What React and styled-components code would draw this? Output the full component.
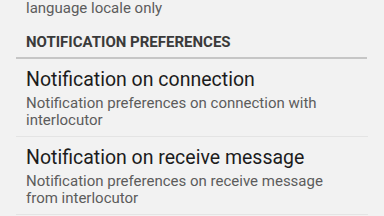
import React from "react";
import styled, { createGlobalStyle } from "styled-components";

const Global = createGlobalStyle`
  html, body { margin: 0; padding: 0; background: #f2f2f2; }
  body { font-family: Roboto, "Noto Sans", Arial, sans-serif; overflow: hidden; }
  * { box-sizing: border-box; }
`;

const Screen = styled.div`
  width: 384px;
  height: 216px;
  background: #f2f2f2;
  overflow: hidden;
  display: flex;
  flex-direction: column;
`;

const Tail = styled.div`
  padding-left: 26px;
  font-size: 15px;
  line-height: 17px;
  color: #5c5c5c;
`;

const Category = styled.div`
  margin: 17px 17px 0 16px;
  padding: 0 0 6px 10px;
  border-bottom: 2px solid #c6c6c6;
  font-size: 15px;
  line-height: 17px;
  font-weight: 700;
  color: #3a3a3a;
`;

const Item = styled.div`
  margin: 0 16px;
  padding: 10px 0 7px 10px;
  border-bottom: 1px solid #e4e4e4;
  display: flex;
  flex-direction: column;
  gap: 4px;
`;

const Title = styled.div`
  font-size: 19.5px;
  line-height: 22px;
  color: #1c1c1c;
`;

const Summary = styled.div`
  width: 310px;
  font-size: 15px;
  line-height: 17px;
  color: #5c5c5c;
`;

const items = [
  {
    title: "Notification on connection",
    summary: "Notification preferences on connection with interlocutor",
  },
  {
    title: "Notification on receive message",
    summary: "Notification preferences on receive message from interlocutor",
  },
];

export default function App() {
  return (
    <Screen>
      <Global />
      <Tail>language locale only</Tail>
      <Category>NOTIFICATION PREFERENCES</Category>
      {items.map((it) => (
        <Item key={it.title}>
          <Title>{it.title}</Title>
          <Summary>{it.summary}</Summary>
        </Item>
      ))}
    </Screen>
  );
}
